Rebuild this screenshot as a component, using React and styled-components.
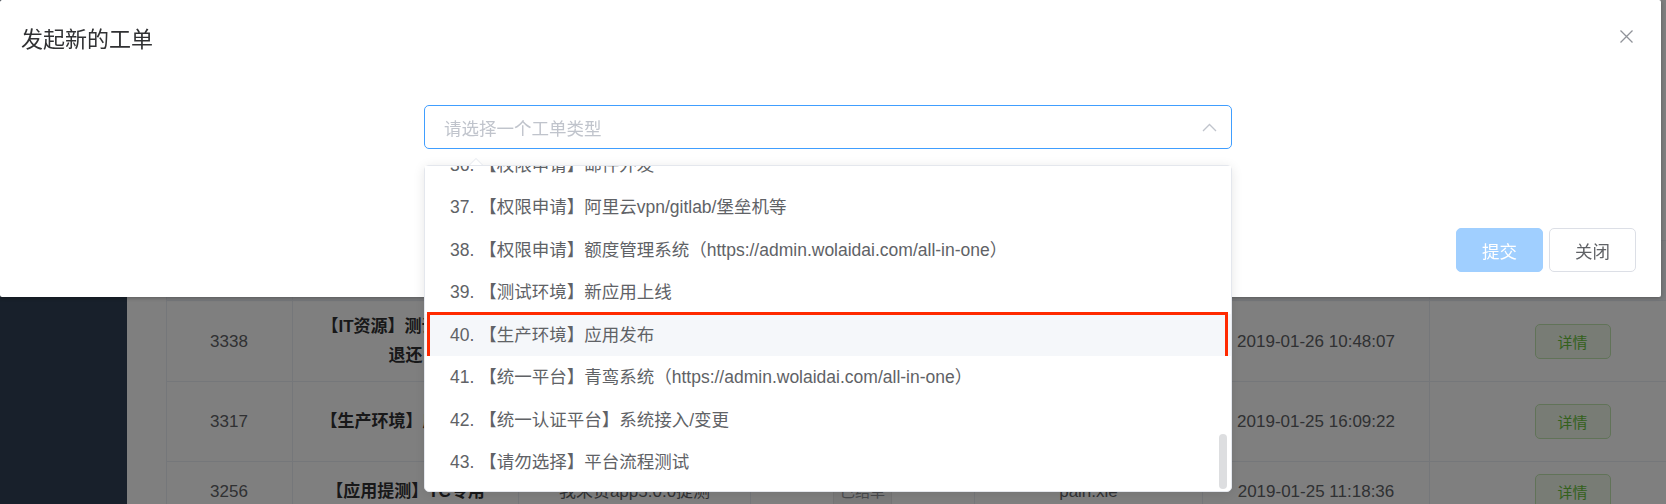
import React, { useLayoutEffect, useRef } from 'react';
import styled, { createGlobalStyle } from 'styled-components';

const GlobalStyle = createGlobalStyle`
    html, body {
        margin: 0;
        padding: 0;
        width: 1666px;
        height: 504px;
        overflow: hidden;
        font-family: 'Liberation Sans', 'Noto Sans CJK SC', sans-serif;
        background: #fff;
    }
    * {
        box-sizing: border-box;
    }
`;

const options = [
    '36. 【权限申请】邮件外发',
    '37. 【权限申请】阿里云vpn/gitlab/堡垒机等',
    '38. 【权限申请】额度管理系统（https://admin.wolaidai.com/all-in-one）',
    '39. 【测试环境】新应用上线',
    '40. 【生产环境】应用发布',
    '41. 【统一平台】青鸾系统（https://admin.wolaidai.com/all-in-one）',
    '42. 【统一认证平台】系统接入/变更',
    '43. 【请勿选择】平台流程测试',
];

const rows = [
    {
        id: 3338,
        title: '【IT资源】测试服务器退还',
        desc: '申请退还测试服务器',
        user: 'lily.wang',
        time: '2019-01-26 10:48:07',
        height: 81,
    },
    {
        id: 3317,
        title: '【生产环境】应用发布',
        desc: '新应用发布上线',
        user: 'tom.li',
        time: '2019-01-25 16:09:22',
        height: 80,
    },
    {
        id: 3256,
        title: '【应用提测】TC专用',
        desc: '我来贷app5.0.0提测',
        user: 'pain.xie',
        time: '2019-01-25 11:18:36',
        height: 60,
    },
];

const columns = '126px 226px 232px 224px 228px 227px 286px';

const Layout = styled.div`
    display: flex;
    width: 1666px;
    height: 504px;
    overflow: hidden;
`;

const Sidebar = styled.aside`
    width: 127px;
    flex-shrink: 0;
    background: #304156;
`;

const Main = styled.main`
    flex: 1;
    padding: 240px 0 0 39px;
    background: #fff;
    overflow: hidden;
`;

const Table = styled.div`
    width: 1549px;
    border-left: 1px solid #ebeef5;
    border-top: 1px solid #ebeef5;
    color: #606266;
    font-size: 17px;
`;

const Row = styled.div`
    display: grid;
    grid-template-columns: ${columns};
    height: ${(props) => props.height}px;
    background: ${(props) => (props.head ? '#f5f7fa' : '#fff')};
`;

const Cell = styled.div`
    display: flex;
    align-items: center;
    justify-content: center;
    padding: 0 20px;
    text-align: center;
    line-height: 29px;
    border-right: 1px solid #ebeef5;
    border-bottom: 1px solid #ebeef5;
    font-weight: ${(props) => (props.bold ? 700 : 400)};
    color: ${(props) => (props.bold ? '#303133' : '#606266')};
    margin-left: ${(props) => (props.first ? '-1px' : '0')};
`;

const Tag = styled.span`
    display: inline-flex;
    align-items: center;
    height: 36px;
    padding: 0 6px;
    font-size: 15px;
    color: #909399;
    background: #f4f4f5;
    border: 1px solid #e9e9eb;
    border-radius: 5px;
`;

const DetailBtn = styled.button`
    width: 76px;
    height: 35px;
    font-family: inherit;
    font-size: 15px;
    color: #67c23a;
    background: #f0f9eb;
    border: 1px solid #c2e7b0;
    border-radius: 5px;
`;

const Mask = styled.div`
    position: fixed;
    inset: 0;
    background: rgba(0, 0, 0, 0.5);
`;

const Dialog = styled.div`
    position: fixed;
    top: 0;
    left: 0;
    width: 1661px;
    background: #fff;
    border-radius: 2px;
    box-shadow: 0 1px 4px rgba(0, 0, 0, 0.3);
`;

const DialogHeader = styled.div`
    position: relative;
    padding: 25px 25px 12.5px 21px;
`;

const Title = styled.span`
    font-size: 22px;
    line-height: 30px;
    color: #303133;
`;

const CloseBtn = styled.button`
    position: absolute;
    top: 26px;
    right: 25px;
    width: 20px;
    height: 20px;
    padding: 0;
    display: flex;
    align-items: center;
    justify-content: center;
    background: none;
    border: none;
`;

const DialogBody = styled.div`
    display: flex;
    justify-content: center;
    padding: 37.5px 25px 79px 20px;
`;

const SelectWrap = styled.div`
    position: relative;
    width: 808px;
`;

const SelectInput = styled.div`
    display: flex;
    align-items: center;
    justify-content: space-between;
    height: 44px;
    padding: 0 14px 0 19px;
    border: 1px solid #409eff;
    border-radius: 5px;
    font-size: 17.5px;
    color: #c0c4cc;
`;

const Dropdown = styled.div`
    position: absolute;
    top: calc(100% + 16px);
    left: 0;
    width: 100%;
    height: 327px;
    background: #fff;
    border: 1px solid #e4e7ed;
    border-radius: 5px;
    box-shadow: 0 2px 12px rgba(0, 0, 0, 0.1);
    z-index: 2;
`;

const Arrow = styled.span`
    position: absolute;
    top: -8px;
    left: 44px;
    width: 0;
    height: 0;
    border-left: 7px solid transparent;
    border-right: 7px solid transparent;
    border-bottom: 7px solid #e4e7ed;
    &::after {
        content: '';
        position: absolute;
        top: 1px;
        left: -6px;
        border-left: 6px solid transparent;
        border-right: 6px solid transparent;
        border-bottom: 6px solid #fff;
    }
`;

const OptionList = styled.ul`
    list-style: none;
    margin: 0;
    padding: 7.5px 0;
    height: 100%;
    overflow: hidden;
`;

const Option = styled.li`
    position: relative;
    height: 42.5px;
    line-height: 42.5px;
    padding: 0 25px;
    font-size: 17.5px;
    color: #606266;
    white-space: nowrap;
    background: ${(props) => (props.hover ? '#f5f7fa' : '#fff')};
`;

const Marker = styled.span`
    position: absolute;
    top: -2px;
    left: 2px;
    right: 3px;
    bottom: -9px;
    border: 3px solid #ff2a00;
    pointer-events: none;
`;

const Thumb = styled.span`
    position: absolute;
    top: 268px;
    right: 4px;
    width: 8px;
    height: 55px;
    border-radius: 4px;
    background: rgba(144, 147, 153, 0.3);
`;

const DialogFooter = styled.div`
    display: flex;
    justify-content: flex-end;
    gap: 6px;
    padding: 0 25px 25px;
`;

const Button = styled.button`
    height: 44px;
    padding: 0 25px;
    font-family: inherit;
    font-size: 17.5px;
    border-radius: 5px;
    color: ${(props) => (props.primary ? '#fff' : '#606266')};
    background: ${(props) => (props.primary ? '#a0cfff' : '#fff')};
    border: 1px solid ${(props) => (props.primary ? '#a0cfff' : '#dcdfe6')};
`;

function SelectDropdown() {
    const listRef = useRef(null);
    useLayoutEffect(() => {
        const el = listRef.current;
        if (el) el.scrollTop = el.scrollHeight;
    }, []);
    return (
        <Dropdown>
            <Arrow />
            <OptionList ref={listRef}>
                {options.map((opt) => (
                    <Option key={opt} hover={opt.startsWith('40.')}>
                        {opt}
                        {opt.startsWith('40.') && <Marker />}
                    </Option>
                ))}
            </OptionList>
            <Thumb />
        </Dropdown>
    );
}

function OrderTable() {
    return (
        <Table>
            <Row head height={60}>
                <Cell first>ID</Cell>
                <Cell bold>工单类型</Cell>
                <Cell>描述</Cell>
                <Cell>状态</Cell>
                <Cell>申请人</Cell>
                <Cell>创建时间</Cell>
                <Cell>操作</Cell>
            </Row>
            {rows.map((row) => (
                <Row key={row.id} height={row.height}>
                    <Cell first>{row.id}</Cell>
                    <Cell bold>{row.title}</Cell>
                    <Cell>{row.desc}</Cell>
                    <Cell>
                        <Tag>已结单</Tag>
                    </Cell>
                    <Cell>{row.user}</Cell>
                    <Cell>{row.time}</Cell>
                    <Cell>
                        <DetailBtn type='button'>详情</DetailBtn>
                    </Cell>
                </Row>
            ))}
        </Table>
    );
}

function App() {
    return (
        <>
            <GlobalStyle />
            <Layout>
                <Sidebar />
                <Main>
                    <OrderTable />
                </Main>
            </Layout>
            <Mask />
            <Dialog>
                <DialogHeader>
                    <Title>发起新的工单</Title>
                    <CloseBtn type='button'>
                        <svg width='13' height='13' viewBox='0 0 13 13'>
                            <path d='M0.5 0.5L12.5 12.5M12.5 0.5L0.5 12.5' stroke='#909399' strokeWidth='1.3' />
                        </svg>
                    </CloseBtn>
                </DialogHeader>
                <DialogBody>
                    <SelectWrap>
                        <SelectInput>
                            <span>请选择一个工单类型</span>
                            <svg width='15' height='9' viewBox='0 0 15 9'>
                                <polyline points='1,8 7.5,1.5 14,8' fill='none' stroke='#c0c4cc' strokeWidth='1.3' />
                            </svg>
                        </SelectInput>
                        <SelectDropdown />
                    </SelectWrap>
                </DialogBody>
                <DialogFooter>
                    <Button primary type='button'>提交</Button>
                    <Button type='button'>关闭</Button>
                </DialogFooter>
            </Dialog>
        </>
    );
}

export default App;
